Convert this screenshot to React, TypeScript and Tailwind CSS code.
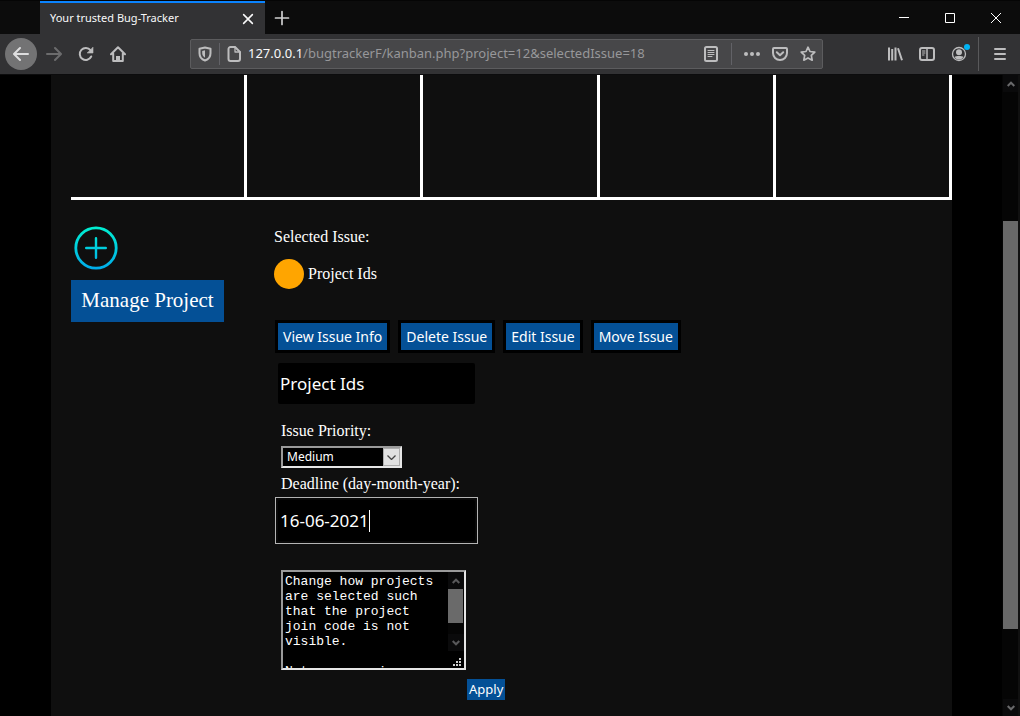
import { useState } from "react";
import type { ReactNode } from "react";

const sans = "font-['Noto_Sans',sans-serif]";
const serif = "font-['Liberation_Serif',serif]";

type IconProps = { children: ReactNode; className?: string };

function Icon({ children, className = "size-4" }: IconProps) {
  return (
    <svg
      viewBox="0 0 16 16"
      className={`shrink-0 ${className}`}
      fill="none"
      stroke="currentColor"
      strokeWidth="2"
      strokeLinecap="round"
      strokeLinejoin="round"
      aria-hidden="true"
    >
      {children}
    </svg>
  );
}

function TitleBar() {
  return (
    <div className="flex h-[34px] border-t border-[#050505] bg-[#0c0c0c] pr-px pl-10">
      <div className="flex w-[225px] items-center justify-between border-t-2 border-[#0a84ff] bg-[#323234] px-[10px] text-[#f9f9fa]">
        <span className="text-[11px]">Your trusted Bug-Tracker</span>
        <button type="button" aria-label="Close tab">
          <Icon className="size-[14px]">
            <path d="M3 3l10 10M13 3L3 13" strokeWidth="1.8" />
          </Icon>
        </button>
      </div>
      <button type="button" aria-label="New tab" className="ml-2 flex w-[18px] items-center justify-center text-[#cfcfd0]">
        <Icon>
          <path d="M8 1.500v13M1.500 8h13" strokeWidth="1.700" />
        </Icon>
      </button>
      <div className="ml-auto flex text-white">
        <button type="button" aria-label="Minimize" className="flex w-[46px] items-center justify-center">
          <svg className="size-[10px]" viewBox="0 0 10 10" shapeRendering="crispEdges"><path d="M0 4.500h10" stroke="currentColor" /></svg>
        </button>
        <button type="button" aria-label="Maximize" className="flex w-[46px] items-center justify-center">
          <svg className="size-[10px]" viewBox="0 0 10 10" fill="none"><path d="M.5.5h9v9h-9z" stroke="currentColor" /></svg>
        </button>
        <button type="button" aria-label="Close" className="flex w-[46px] items-center justify-center">
          <svg className="size-[10px]" viewBox="0 0 10 10"><path d="M0 0l10 10M10 0L0 10" stroke="currentColor" /></svg>
        </button>
      </div>
    </div>
  );
}

function Toolbar() {
  return (
    <div className="flex h-10 items-center bg-[#323234] pl-[5px] text-[#bdbdbe]">
      <button type="button" aria-label="Back" className="flex size-8 items-center justify-center rounded-full bg-[#737374] text-[#dededf]">
        <Icon><path d="M15 8H1.500M7 2L1 8l6 6" /></Icon>
      </button>
      <button type="button" aria-label="Forward" className="ml-[9px] text-[#6c6c6d]">
        <Icon><path d="M1 8h13.500M9 2l6 6-6 6" /></Icon>
      </button>
      <button type="button" aria-label="Reload" className="ml-4">
        <Icon>
          <path d="M13.200 10.500A6 6 0 1 1 12.500 4.200" />
          <path d="M15 1.500v5.500H9.500z" fill="currentColor" strokeWidth=".6" />
        </Icon>
      </button>
      <button type="button" aria-label="Home" className="ml-4">
        <Icon>
          <path d="M1 8.200L8 1.200l7 7M3.200 7.500V15h9.600V7.500" />
          <path d="M6 15v-5h4v5z" fill="currentColor" stroke="none" />
        </Icon>
      </button>
      <div className="ml-16 flex h-[30px] min-w-0 flex-1 items-center rounded-[2px] border border-[#5c5c5e] bg-[#474749] px-[6px]">
        <Icon>
          <path d="M8 1.500l5.500 1.300v4.400C13.500 11 11 13.500 8 14.500 5 13.500 2.500 11 2.500 7.200V2.800z" />
          <path d="M8 4.300v7.400C6.200 10.500 5.200 9 5.200 7V5z" fill="currentColor" stroke="none" />
        </Icon>
        <span className="ml-[6px] h-[22px] w-px shrink-0 bg-[#626267]" />
        <Icon className="ml-[6px] size-4">
          <path d="M2.500 3a2 2 0 0 1 2-2H9l5 5v7a2 2 0 0 1-2 2H4.500a2 2 0 0 1-2-2z" />
          <path d="M9 1v5h5" strokeWidth="1.300" />
        </Icon>
        <label htmlFor="address" className="ml-[6px] text-[13px] text-[#f9f9fa]">127.0.0.1</label>
        <input
          id="address"
          readOnly
          value="/bugtrackerF/kanban.php?project=12&selectedIssue=18"
          className="min-w-0 flex-1 bg-transparent text-[13px] text-[#97979a] outline-none"
        />
        <button type="button" aria-label="Reader view">
          <Icon>
            <rect x="2" y="1" width="12" height="14" rx="1.500" />
            <path d="M5 4.500h6M5 6.500h6M5 8.500h6M5 10.500h4" strokeWidth="1" />
          </Icon>
        </button>
        <span className="ml-3 h-[22px] w-px shrink-0 bg-[#626267]" />
        <button type="button" aria-label="Page actions" className="ml-3">
          <Icon>
            <g fill="currentColor" stroke="none"><circle cx="2" cy="8" r="2" /><circle cx="8" cy="8" r="2" /><circle cx="14" cy="8" r="2" /></g>
          </Icon>
        </button>
        <button type="button" aria-label="Save to Pocket" className="ml-3">
          <Icon>
            <path d="M2 2h12a1 1 0 0 1 1 1v4A7 7 0 0 1 1 7V3a1 1 0 0 1 1-1z" />
            <path d="M4.800 6.300L8 9.300l3.200-3" />
          </Icon>
        </button>
        <button type="button" aria-label="Bookmark" className="ml-3">
          <Icon>
            <path d="M8 1.200l2 4.300 4.800.6-3.500 3.300.9 4.800L8 11.900l-4.200 2.300.9-4.800L1.200 6.100 6 5.500z" strokeWidth="1.700" />
          </Icon>
        </button>
      </div>
      <div className="ml-16 flex items-center">
        <button type="button" aria-label="Library">
          <Icon><path d="M2 1.500v13M5.200 3v11.500M8.500 1.500v13M11 2.200l4 12" strokeLinecap="butt" /></Icon>
        </button>
        <button type="button" aria-label="Sidebars" className="ml-4">
          <Icon>
            <rect x="1" y="2" width="14" height="12" rx="2" />
            <path d="M8 2v12" strokeWidth="1.500" />
            <path d="M3.500 5h2.500M3.500 7h2.500M3.500 9h1.500" strokeWidth="1" />
          </Icon>
        </button>
        <button type="button" aria-label="Account" className="relative ml-4">
          <Icon>
            <circle cx="8" cy="8" r="6.500" strokeWidth="1.300" />
            <g fill="currentColor" stroke="none"><circle cx="8" cy="6.300" r="3" /><path d="M3.500 11c1.500-1.400 7.500-1.400 9 0-2 3.400-7 3.400-9 0z" /></g>
          </Icon>
          <span className="absolute -top-[2px] left-[13px] size-[6px] rounded-full bg-[#00b3f4]" />
        </button>
        <span className="ml-[11px] h-[34px] w-px bg-[#59595b]" />
        <button type="button" aria-label="Menu" className="mr-[12px] ml-[13px]">
          <Icon><path d="M3 3h10M3 8h10M3 13h10" /></Icon>
        </button>
      </div>
    </div>
  );
}

function Chevron({ up = false }: { up?: boolean }) {
  return (
    <svg viewBox="0 0 8 6" className="h-[6px] w-2" fill="none" stroke="currentColor" strokeWidth="2" aria-hidden="true">
      <path d={up ? "M.7 5L4 1.700 7.300 5" : "M.7 1L4 4.300 7.300 1"} />
    </svg>
  );
}

function PageScrollbar() {
  return (
    <div className="flex w-[18px] shrink-0 flex-col border-r-2 border-[#101010] bg-[#050505] pl-px text-[#69696b]">
      <button type="button" aria-label="Scroll up" className="flex h-[17px] items-center justify-center bg-[#0a0a0b]"><Chevron up /></button>
      <div className="flex-[129]" />
      <div className="flex-[408] bg-[#686868]" />
      <div className="flex-[70]" />
      <button type="button" aria-label="Scroll down" className="flex h-[17px] items-center justify-center bg-[#0a0a0b]"><Chevron /></button>
    </div>
  );
}

function Board() {
  return (
    <div className="grid h-[125px] grid-cols-5 border-b-[3px] border-white">
      {["open", "planned", "active", "review", "done"].map((column) => (
        <div key={column} className="border-r-[3px] border-white" />
      ))}
    </div>
  );
}

const actions = ["View Issue Info", "Delete Issue", "Edit Issue", "Move Issue"];

function IssueEditor() {
  const [title, setTitle] = useState("Project Ids");
  const [deadline, setDeadline] = useState("16-06-2021");
  const [description, setDescription] = useState(
    "Change how projects are selected such that the project join code is not visible.\n\nNotes: user is",
  );
  return (
    <section className="min-w-0 flex-1 pt-[27px]">
      <h2 className="leading-[20px]">Selected Issue:</h2>
      <div className="mt-3 flex h-[30px] items-center gap-1">
        <span className="size-[30px] rounded-full bg-[#ffa500]" />
        <span>Project Ids</span>
      </div>
      <div className={`mt-[31px] flex gap-2 pl-px ${sans}`}>
        {actions.map((action) => (
          <button key={action} type="button" className="h-[33px] border-[3px] border-black bg-[#045096] px-[5px] text-[14px] leading-[27px] whitespace-nowrap">
            {action}
          </button>
        ))}
      </div>
      <form onSubmit={(event) => event.preventDefault()} className="mt-[10px]">
        <input
          aria-label="Issue title"
          value={title}
          onChange={(event) => setTitle(event.target.value)}
          className={`ml-1 block h-[41px] w-[197px] rounded-[2px] bg-black px-[2px] text-[17px] outline-none ${sans}`}
        />
        <label htmlFor="priority" className="mt-[17px] ml-[7px] block leading-[20px]">Issue Priority:</label>
        <div className="relative mt-[5px] ml-[7px] w-[121px]">
          <select
            id="priority"
            defaultValue="Medium"
            className={`block h-[22px] w-full appearance-none border-2 border-t-[#9a9a9a] border-r-[#e6e6e6] border-b-[#e6e6e6] border-l-[#9a9a9a] bg-black pl-1 text-[12px] leading-[18px] outline-none ${sans}`}
          >
            <option>Low</option>
            <option>Medium</option>
            <option>High</option>
          </select>
          <span className="pointer-events-none absolute top-[2px] right-[2px] flex h-[18px] w-[17px] items-center justify-center border border-[#acacac] bg-[#e1e1e1] text-[#444]">
            <svg viewBox="0 0 9 5" className="h-[5px] w-[9px]" fill="none" stroke="currentColor" strokeWidth="1.300"><path d="M.5.5l4 4 4-4" /></svg>
          </span>
        </div>
        <label htmlFor="deadline" className="mt-[6px] ml-[7px] block leading-[20px]">Deadline (day-month-year):</label>
        <div className="mt-[3px] ml-px flex h-[47px] w-[203px] items-center border border-[#b4b4b4] bg-[#090909] p-[2px]">
          <div className="flex h-[41px] flex-1 items-center rounded-[2px] bg-black px-[2px]">
            <input
              id="deadline"
              value={deadline}
              onChange={(event) => setDeadline(event.target.value)}
              className={`field-sizing-content h-[22px] border-r border-white bg-transparent text-[17px] leading-[22px] outline-none ${sans}`}
            />
          </div>
        </div>
        <div className="relative mt-[26px] ml-[7px] w-[185px]">
          <textarea
            aria-label="Issue description"
            value={description}
            onChange={(event) => setDescription(event.target.value)}
            className="block h-[100px] w-full resize-none overflow-hidden border-2 border-t-[#9a9a9a] border-r-[#e6e6e6] border-b-[#e6e6e6] border-l-[#9a9a9a] bg-black py-[2px] pr-5 pl-[2px] font-['Liberation_Mono',monospace] text-[13px] leading-[15px] outline-none"
          />
          <div className="absolute top-[2px] right-[2px] flex h-[79px] w-4 flex-col bg-[#050505] text-[#59595b]">
            <span className="flex h-[17px] items-center justify-center bg-[#0a0a0b]"><Chevron up /></span>
            <span className="h-[34px] w-[15px] bg-[#6a6a6a]" />
            <span className="flex-1" />
            <span className="flex h-[17px] items-center justify-center bg-[#0a0a0b]"><Chevron /></span>
          </div>
          <svg viewBox="0 0 8 8" className="absolute right-[5px] bottom-[4px] size-2" fill="#cfcfcf" aria-hidden="true">
            <path d="M6 0h2v2H6zM3 3h2v2H3zM6 3h2v2H6zM0 6h2v2H0zM3 6h2v2H3zM6 6h2v2H6z" />
          </svg>
        </div>
        <button type="submit" className={`mt-[9px] ml-[193px] block h-[21px] bg-[#045096] px-[2px] text-[13px] leading-[21px] ${sans}`}>
          Apply
        </button>
      </form>
    </section>
  );
}

export default function App() {
  return (
    <div className={`flex h-screen flex-col overflow-hidden bg-black text-white ${sans}`}>
      <TitleBar />
      <Toolbar />
      <div className="flex min-h-0 flex-1 border-t border-[#0c0c0d]">
        <main className={`min-w-0 flex-1 overflow-hidden pr-[50px] pl-[51px] text-[16px] ${serif}`}>
          <div className="h-full bg-[#0f0f0f] pl-5">
            <Board />
            <div className="flex">
              <aside className="w-[203px] shrink-0 pt-[23px]">
                <button type="button" aria-label="Add issue" className="block size-[50px]">
                  <svg viewBox="0 0 50 50" className="size-[50px]" fill="none" stroke="url(#ring)" strokeWidth="2.800" aria-hidden="true">
                    <defs>
                      <linearGradient id="ring" gradientUnits="userSpaceOnUse" x1="0" y1="4" x2="0" y2="46">
                        <stop stopColor="#00efd1" />
                        <stop offset="1" stopColor="#00acea" />
                      </linearGradient>
                    </defs>
                    <circle cx="25" cy="25" r="20.200" />
                    <path d="M25 15.200v19.600M15.200 25h19.600" strokeWidth="2.400" strokeLinecap="round" />
                  </svg>
                </button>
                <button type="button" className="mt-[7px] h-[42px] w-[153px] bg-[#045096] text-[21px] whitespace-nowrap">
                  Manage Project
                </button>
              </aside>
              <IssueEditor />
            </div>
          </div>
        </main>
        <PageScrollbar />
      </div>
    </div>
  );
}
